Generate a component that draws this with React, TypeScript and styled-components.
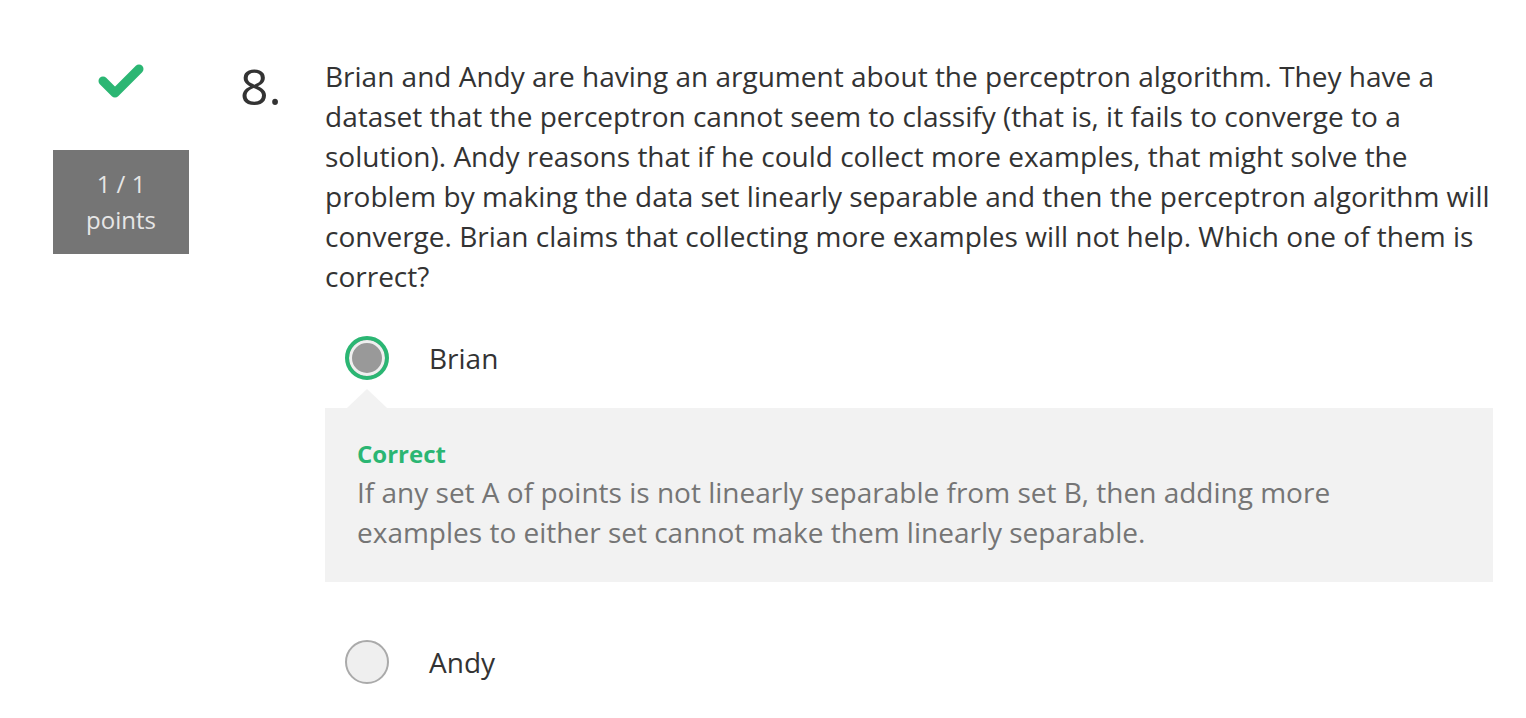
import React from "react";
import styled, { createGlobalStyle } from "styled-components";

const Global = createGlobalStyle`
  html, body { margin: 0; padding: 0; background: #fff; }
  body { font-family: "Open Sans", "Noto Sans", sans-serif; color: #333; }
`;

const Page = styled.div`
  display: flex;
  align-items: flex-start;
  padding: 56px 0 0 53px;
`;

const Side = styled.div`
  width: 136px;
  display: flex;
  flex-direction: column;
  align-items: center;
`;

const CheckWrap = styled.div`
  height: 36px;
  margin-top: 7px;
  display: flex;
  justify-content: center;
`;

const Points = styled.div`
  margin-top: 51px;
  width: 136px;
  height: 104px;
  background: #757575;
  color: #e6e6e6;
  font-size: 24px;
  line-height: 36px;
  display: flex;
  flex-direction: column;
  align-items: center;
  justify-content: center;
`;

const Number = styled.div`
  width: 85px;
  margin-left: 51px;
  font-size: 50px;
  line-height: 60px;
  color: #333;
`;

const Content = styled.div`
  width: 1168px;
`;

const Question = styled.div`
  font-size: 28px;
  line-height: 40px;
  color: #333;
`;

const Option = styled.div<{ $top: number }>`
  display: flex;
  align-items: center;
  padding-left: 20px;
  margin-top: ${(p) => p.$top}px;
  height: 44px;
`;

const Radio = styled.span<{ $selected?: boolean }>`
  box-sizing: border-box;
  width: 44px;
  height: 44px;
  border-radius: 50%;
  flex: none;
  border: ${(p) => (p.$selected ? "4px solid #2bb673" : "2px solid #aaa")};
  background: ${(p) => (p.$selected ? "#999" : "#efefef")};
  box-shadow: ${(p) => (p.$selected ? "inset 0 0 0 3px #efefef" : "none")};
`;

const Label = styled.span`
  margin-left: 40px;
  font-size: 28px;
  color: #333;
`;

const Feedback = styled.div`
  position: relative;
  margin-top: 28px;
  background: #f2f2f2;
  height: 174px;
  box-sizing: border-box;
  padding: 28px 32px 0;
  &::before {
    content: "";
    position: absolute;
    left: 22px;
    top: -19px;
    border-left: 20px solid transparent;
    border-right: 20px solid transparent;
    border-bottom: 19px solid #f2f2f2;
  }
`;

const Verdict = styled.div`
  font-size: 24px;
  font-weight: 700;
  color: #2bb673;
  line-height: 36px;
`;

const Explain = styled.div`
  font-size: 28px;
  line-height: 40px;
  color: #757575;
`;

const Check = () => (
  <svg width="46" height="36" viewBox="0 0 46 36">
    <path
      d="M5 18 L17 30 L41 6"
      fill="none"
      stroke="#2bb673"
      strokeWidth="9"
      strokeLinecap="round"
      strokeLinejoin="round"
    />
  </svg>
);

export default function App() {
  return (
    <>
      <Global />
      <Page>
        <Side>
          <CheckWrap>
            <Check />
          </CheckWrap>
          <Points>
            <span>1 / 1</span>
            <span>points</span>
          </Points>
        </Side>
        <Number>8.</Number>
        <Content>
          <Question>
            Brian and Andy are having an argument about the perceptron algorithm. They have a
            dataset that the perceptron cannot seem to classify (that is, it fails to converge to a
            solution). Andy reasons that if he could collect more examples, that might solve the
            problem by making the data set linearly separable and then the perceptron algorithm will
            converge. Brian claims that collecting more examples will not help. Which one of them is
            correct?
          </Question>
          <Option $top={40}>
            <Radio $selected />
            <Label>Brian</Label>
          </Option>
          <Feedback>
            <Verdict>Correct</Verdict>
            <Explain>
              If any set A of points is not linearly separable from set B, then adding more
              <br />
              examples to either set cannot make them linearly separable.
            </Explain>
          </Feedback>
          <Option $top={58}>
            <Radio />
            <Label>Andy</Label>
          </Option>
        </Content>
      </Page>
    </>
  );
}
